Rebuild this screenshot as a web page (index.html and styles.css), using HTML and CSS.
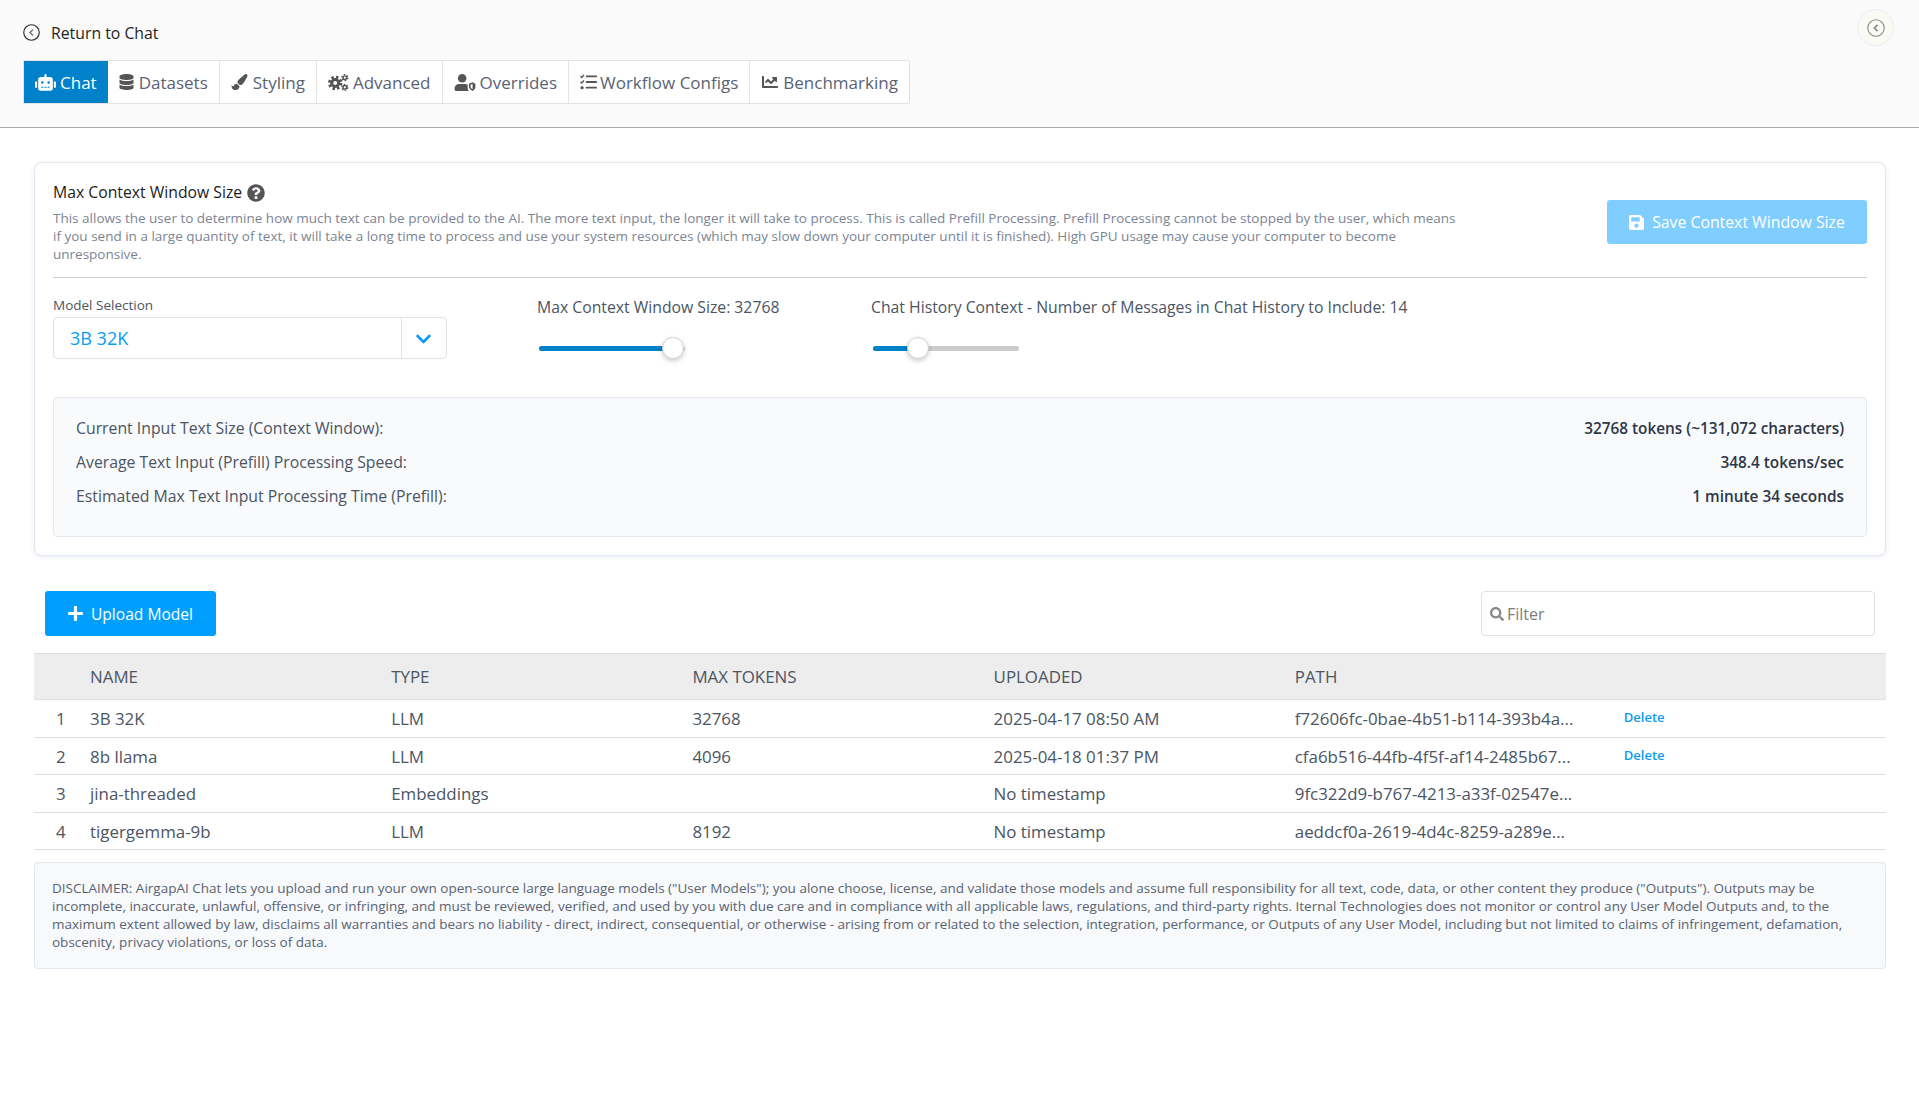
FILE: index.html
```html
<!DOCTYPE html>
<html lang="en">
<head>
<meta charset="utf-8">
<title>Models</title>
<link rel="stylesheet" href="styles.css">
</head>
<body>
<header class="top">
  <a class="return"><svg class="ret-ic" viewBox="0 0 16 16"><circle cx="8" cy="8" r="7.3"/><path d="M9.4 5.2 6.6 8l2.8 2.8"/></svg><span>Return to Chat</span></a>
  <nav class="tabs">
    <a class="tab active"><svg class="ic w-robot" viewBox="0 0 640 512"><path d="M32 224h32v192H32c-17.700 0-32-14.300-32-32V256c0-17.700 14.300-32 32-32zm576 0h-32v192h32c17.700 0 32-14.300 32-32V256c0-17.700-14.300-32-32-32zM544 168v272c0 35.300-28.700 64-64 64H160c-35.300 0-64-28.700-64-64V168c0-44.200 35.800-80 80-80h112V32c0-17.700 14.300-32 32-32s32 14.300 32 32v56h112c44.200 0 80 35.800 80 80zM264 256a40 40 0 1 0-80 0 40 40 0 0 0 80 0zm192 0a40 40 0 1 0-80 0 40 40 0 0 0 80 0zM256 384h-64v32h64zm96 0h-64v32h64zm96 0h-64v32h64z" fill-rule="evenodd"/></svg>Chat</a>
    <a class="tab"><svg class="ic w-db" viewBox="0 0 448 512"><path d="M448 73.143v45.714C448 159.143 347.667 192 224 192S0 159.143 0 118.857V73.143C0 32.857 100.333 0 224 0s224 32.857 224 73.143zM448 176v102.857C448 319.143 347.667 352 224 352S0 319.143 0 278.857V176c48.125 33.143 136.208 48.572 224 48.572S399.874 209.143 448 176zm0 160v102.857C448 479.143 347.667 512 224 512S0 479.143 0 438.857V336c48.125 33.143 136.208 48.572 224 48.572S399.874 369.143 448 336z"/></svg>Datasets</a>
    <a class="tab"><svg class="ic w-brush" viewBox="0 0 512 512"><path d="M167.020 309.340c-40.120 2.580-76.530 17.860-97.190 72.300-2.350 6.210-8 9.980-14.590 9.980-11.110 0-45.460-27.670-55.250-34.350C0 439.620 37.930 512 128 512c75.860 0 128-43.770 128-120.190 0-3.110-.65-6.080-.97-9.130l-88.010-73.340zM457.890 0c-15.160 0-29.370 6.710-40.210 16.450C213.270 199.050 192 203.340 192 257.090c0 13.700 3.250 26.760 8.730 38.700l63.820 53.180c7.210 1.800 14.640 3.030 22.390 3.030 62.110 0 98.110-45.470 211.160-256.460 7.380-14.350 13.900-29.850 13.900-45.990C512 20.640 486 0 457.890 0z"/></svg>Styling</a>
    <a class="tab"><svg class="ic w-cogs" viewBox="0 0 22 18"><g class="cog"><circle class="teeth" cx="7.500" cy="9.500" r="6.100"/><circle class="rim" cx="7.500" cy="9.500" r="3.700"/></g><g class="cog"><circle class="teeth-s" cx="17.700" cy="3.900" r="3.100"/><circle class="rim-s" cx="17.700" cy="3.900" r="1.900"/></g><g class="cog"><circle class="teeth-s" cx="17.700" cy="14.100" r="3.100"/><circle class="rim-s" cx="17.700" cy="14.100" r="1.900"/></g></svg>Advanced</a>
    <a class="tab"><svg class="ic w-user" viewBox="0 0 22 18"><circle cx="8" cy="4.500" r="4.500"/><path d="M5 10.500h6c1 0 2 .2 2.800.6V14c0 1.500.4 2.900 1.200 4H1.600C.7 18 0 17.300 0 16.400v-1C0 12.700 2.200 10.500 5 10.500z"/><path d="M15.200 10.200 19 8.800l3 1.400v3.300c0 2.200-1.400 3.600-3 4.500-1.600-.9-3.800-2.300-3.800-4.500z"/><path class="shield-cut" d="M19 10.600v5.500c-1-.6-2.100-1.500-2.100-2.900v-1.900z"/></svg>Overrides</a>
    <a class="tab"><svg class="ic w-tasks" viewBox="0 0 18 16"><path class="tk" d="M.6 2 1.800 3.200 4.200.7M.6 7.800 1.800 9l2.400-2.500"/><circle cx="2.200" cy="14" r="1.700"/><rect x="6.200" y="1" width="11.800" height="2" rx=".5"/><rect x="6.200" y="7" width="11.800" height="2" rx=".5"/><rect x="6.200" y="13" width="11.800" height="2" rx=".5"/></svg>Workflow Configs</a>
    <a class="tab"><svg class="ic w-chart" viewBox="0 0 512 512"><path d="M496 384H64V80c0-8.840-7.160-16-16-16H16C7.160 64 0 71.160 0 80v336c0 17.670 14.330 32 32 32h464c8.840 0 16-7.160 16-16v-32c0-8.840-7.160-16-16-16zM464 96H345.940c-21.380 0-32.090 25.850-16.970 40.970l32.400 32.400L288 242.750l-73.370-73.370c-12.500-12.500-32.760-12.500-45.250 0l-68.690 68.690c-6.250 6.250-6.250 16.380 0 22.630l22.620 22.620c6.250 6.250 16.380 6.250 22.630 0L192 237.250l73.370 73.370c12.500 12.500 32.760 12.500 45.250 0l96-96 32.400 32.400c15.120 15.120 40.970 4.410 40.970-16.970V112c.01-8.840-7.150-16-15.990-16z"/></svg>Benchmarking</a>
  </nav>
  <div class="collapse"><svg class="col-ic" viewBox="0 0 16 16"><circle cx="8" cy="8" r="7.300"/><path d="M9.400 5.200 6.600 8l2.800 2.800"/></svg></div>
</header>

<main class="main">
  <section class="card">
    <div class="card-head">
      <div class="card-intro">
        <h2 class="card-title">Max Context Window Size <svg class="help" viewBox="0 0 512 512"><path d="M504 256c0 136.997-111.043 248-248 248S8 392.997 8 256C8 119.083 119.043 8 256 8s248 111.083 248 248zM262.655 90c-54.497 0-89.255 22.957-116.549 63.758-3.536 5.286-2.353 12.415 2.715 16.258l34.699 26.310c5.205 3.947 12.621 3.008 16.665-2.122 17.864-22.658 30.113-35.797 57.303-35.797 20.429 0 45.698 13.148 45.698 32.958 0 14.976-12.363 22.667-32.534 33.976C247.128 238.528 216 254.941 216 296v4c0 6.627 5.373 12 12 12h56c6.627 0 12-5.373 12-12v-1.333c0-28.462 83.186-29.647 83.186-106.667 0-58.002-60.165-102-116.531-102zM256 338c-25.365 0-46 20.635-46 46 0 25.364 20.635 46 46 46s46-20.636 46-46c0-25.365-20.635-46-46-46z"/></svg></h2>
        <p class="card-desc">This allows the user to determine how much text can be provided to the AI. The more text input, the longer it will take to process. This is called Prefill Processing. Prefill Processing cannot be stopped by the user, which means if you send in a large quantity of text, it will take a long time to process and use your system resources (which may slow down your computer until it is finished). High GPU usage may cause your computer to become unresponsive.</p>
      </div>
      <button class="btn-save"><svg class="save-ic" viewBox="0 0 448 512"><path d="M433.941 129.941l-83.882-83.882A48 48 0 0 0 316.118 32H48C21.490 32 0 53.490 0 80v352c0 26.510 21.490 48 48 48h352c26.510 0 48-21.490 48-48V163.882a48 48 0 0 0-14.059-33.941zM224 416c-35.346 0-64-28.654-64-64 0-35.346 28.654-64 64-64s64 28.654 64 64c0 35.346-28.654 64-64 64zm96-304.520V212c0 6.627-5.373 12-12 12H76c-6.627 0-12-5.373-12-12V108c0-6.627 5.373-12 12-12h228.520c3.183 0 6.235 1.264 8.485 3.515l3.480 3.480A11.996 11.996 0 0 1 320 111.480z"/></svg>Save Context Window Size</button>
    </div>
    <div class="controls">
      <div class="ctl-model">
        <label class="model-label">Model Selection</label>
        <div class="select">
          <span class="select-val">3B 32K</span>
          <span class="select-arrow"><svg class="chev" viewBox="0 0 448 512"><path d="M207.029 381.476L12.686 187.132c-9.373-9.373-9.373-24.569 0-33.941l22.667-22.667c9.357-9.357 24.522-9.375 33.901-.04L224 284.505l154.745-154.021c9.379-9.335 24.544-9.317 33.901.04l22.667 22.667c9.373 9.373 9.373 24.569 0 33.941L240.971 381.476c-9.373 9.372-24.569 9.372-33.942 0z"/></svg></span>
        </div>
      </div>
      <div class="ctl-slider">
        <div class="slider-label">Max Context Window Size: 32768</div>
        <div class="slider"><div class="fill" style="width:134px"></div><div class="thumb" style="left:134px"></div></div>
      </div>
      <div class="ctl-slider">
        <div class="slider-label">Chat History Context - Number of Messages in Chat History to Include: 14</div>
        <div class="slider"><div class="fill" style="width:45px"></div><div class="thumb" style="left:45px"></div></div>
      </div>
    </div>
    <div class="stats">
      <div class="stat"><span>Current Input Text Size (Context Window):</span><b>32768 tokens (~131,072 characters)</b></div>
      <div class="stat"><span>Average Text Input (Prefill) Processing Speed:</span><b>348.4 tokens/sec</b></div>
      <div class="stat"><span>Estimated Max Text Input Processing Time (Prefill):</span><b>1 minute 34 seconds</b></div>
    </div>
  </section>

  <div class="toolbar">
    <button class="btn-upload"><svg class="plus" viewBox="0 0 448 512"><path d="M416 208H272V64c0-17.670-14.330-32-32-32h-32c-17.670 0-32 14.330-32 32v144H32c-17.670 0-32 14.330-32 32v32c0 17.670 14.330 32 32 32h144v144c0 17.670 14.330 32 32 32h32c17.670 0 32-14.330 32-32V304h144c17.670 0 32-14.330 32-32v-32c0-17.670-14.330-32-32-32z"/></svg>Upload Model</button>
    <div class="filter"><svg class="search" viewBox="0 0 512 512"><path d="M505 442.700L405.300 343c-4.500-4.500-10.600-7-17-7H372c27.600-35.300 44-79.700 44-128C416 93.100 322.900 0 208 0S0 93.100 0 208s93.100 208 208 208c48.300 0 92.700-16.400 128-44v16.300c0 6.400 2.500 12.500 7 17l99.700 99.700c9.400 9.400 24.600 9.400 33.900 0l28.300-28.300c9.400-9.400 9.400-24.600.1-34zM208 336c-70.700 0-128-57.200-128-128 0-70.700 57.200-128 128-128 70.700 0 128 57.200 128 128 0 70.700-57.200 128-128 128z"/></svg><span>Filter</span></div>
  </div>

  <div class="table">
    <div class="row head"><span></span><span>NAME</span><span>TYPE</span><span>MAX TOKENS</span><span>UPLOADED</span><span>PATH</span><span></span></div>
    <div class="row"><span class="num">1</span><span>3B 32K</span><span>LLM</span><span>32768</span><span>2025-04-17 08:50 AM</span><span>f72606fc-0bae-4b51-b114-393b4a...</span><a class="del">Delete</a></div>
    <div class="row r2"><span class="num">2</span><span>8b llama</span><span>LLM</span><span>4096</span><span>2025-04-18 01:37 PM</span><span>cfa6b516-44fb-4f5f-af14-2485b67...</span><a class="del">Delete</a></div>
    <div class="row"><span class="num">3</span><span>jina-threaded</span><span>Embeddings</span><span></span><span>No timestamp</span><span>9fc322d9-b767-4213-a33f-02547e...</span><span></span></div>
    <div class="row r2"><span class="num">4</span><span>tigergemma-9b</span><span>LLM</span><span>8192</span><span>No timestamp</span><span>aeddcf0a-2619-4d4c-8259-a289e...</span><span></span></div>
  </div>

  <div class="disclaimer">DISCLAIMER: AirgapAI Chat lets you upload and run your own open-source large language models ("User Models"); you alone choose, license, and validate those models and assume full responsibility for all text, code, data, or other content they produce ("Outputs"). Outputs may be incomplete, inaccurate, unlawful, offensive, or infringing, and must be reviewed, verified, and used by you with due care and in compliance with all applicable laws, regulations, and third-party rights. Iternal Technologies does not monitor or control any User Model Outputs and, to the maximum extent allowed by law, disclaims all warranties and bears no liability - direct, indirect, consequential, or otherwise - arising from or related to the selection, integration, performance, or Outputs of any User Model, including but not limited to claims of infringement, defamation, obscenity, privacy violations, or loss of data.</div>
</main>
</body>
</html>
```
FILE: styles.css
```css
* { box-sizing: border-box; }
html, body { margin: 0; padding: 0; }
body { font-family: "Open Sans", sans-serif; font-size: 16px; color: #374151; background: #fff; }

.top { position: relative; height: 128px; background: #fafafa; border-bottom: 1px solid #a9a9a9; padding: 22px 23px 0; }
.return { display: flex; align-items: center; height: 22px; color: #1f1f1f; font-size: 15.800px; line-height: 22px; }
.ret-ic { width: 17px; height: 17px; margin: -2px 11px 0 0; fill: none; stroke: #333; stroke-width: 1.1; }
.ret-ic path { stroke-width: 1.4; stroke: #777; }
.tabs { display: inline-flex; margin-top: 16px; height: 44px; background: #fff; border: 1px solid #e2e2e2; border-radius: 2px; }
.tab { display: flex; align-items: center; padding: 0 11px; color: #596373; font-size: 17px; border-right: 1px solid #e5e5e5; white-space: nowrap; }
.tab:last-child { border-right: 0; }
.tab.active { background: #0081c9; color: #fff; border-right: 0; }
.ic { height: 16px; margin-right: 4px; fill: #555; flex: none; }
.active .ic { fill: #fff; }
.w-robot { width: 21px; height: 17px; }
.w-db { width: 15px; margin-right: 5px; }
.w-brush { width: 17px; margin-right: 5px; }
.w-cogs { width: 21px; height: 17px; }
.w-user { width: 22px; height: 17px; }
.w-tasks { width: 17px; margin-right: 3px; }
.w-chart { width: 18px; }
.cog .teeth { fill: none; stroke: #555; stroke-width: 3; stroke-dasharray: 2.600 2.190; }
.cog .rim { fill: none; stroke: #555; stroke-width: 3.2; }
.cog .teeth-s { fill: none; stroke: #555; stroke-width: 1.5; stroke-dasharray: 1.700 1.550; }
.cog .rim-s { fill: none; stroke: #555; stroke-width: 1.5; }
.shield-cut { fill: #fff; }
.tk { fill: none; stroke: #555; stroke-width: 1.5; }
.collapse { position: absolute; top: 9px; right: 25px; width: 37px; height: 37px; display: flex; align-items: center; justify-content: center; background: #fafaf5; border: 1px solid #ededed; border-radius: 50%; }
.col-ic { width: 18px; height: 18px; fill: none; stroke: #8a8a8a; stroke-width: 1; }
.col-ic path { stroke-width: 1.5; }

.main { padding: 34px 33px 0 34px; }
.card { background: #fff; border: 1px solid #e2e8f0; border-radius: 8px; box-shadow: 0 1px 4px rgba(30, 60, 110, .1); padding: 17px 18px 18px; height: 394px; }
.card-head { display: flex; justify-content: space-between; align-items: center; padding-bottom: 15px; border-bottom: 1px solid #cfcfcf; height: 98px; }
.card-intro { width: 1410px; align-self: flex-start; }
.card-title { display: flex; align-items: center; margin: 0; font-size: 15.750px; font-weight: 400; line-height: 25px; color: #1c1c1c; }
.help { width: 18px; height: 18px; margin-left: 5px; fill: #555; }
.card-desc { margin: 4px 0 0; font-size: 13.500px; line-height: 18px; color: #7b8494; }
.btn-save { display: flex; align-items: center; justify-content: center; width: 260px; height: 44px; margin-top: 2px; border: 0; border-radius: 3px; background: #80ceff; color: #fff; font: 400 15.800px "Open Sans", sans-serif; }
.save-ic { width: 15px; height: 17px; fill: #fff; margin-right: 8px; }

.controls { display: grid; grid-template-columns: 484px 334px 1fr; margin-top: 17px; height: 102px; }
.ctl-model { width: 394px; }
.model-label { display: block; font-size: 13.500px; line-height: 20px; color: #4b5563; margin-bottom: 2px; }
.select { display: flex; height: 42px; border: 1px solid #e2e2e2; border-radius: 4px; align-items: stretch; }
.select-val { flex: 1; padding-left: 16px; line-height: 40px; color: #0a9bf5; font-size: 18px; }
.select-arrow { width: 45px; padding-right: 2px; display: flex; align-items: center; justify-content: center; border-left: 1px solid #e2e2e2; }
.chev { width: 15px; height: 18px; fill: #0a9bf5; margin-top: 2px; }
.slider-label { font-size: 15.750px; line-height: 24px; color: #4b5563; white-space: nowrap; }
.slider { position: relative; width: 146px; height: 5px; margin: 27px 0 0 2px; background: #cccccc; border-radius: 3px; }
.fill { height: 5px; background: #0081c9; border-radius: 3px 0 0 3px; }
.thumb { position: absolute; top: -9px; width: 22px; height: 22px; margin-left: -11px; background: #fff; border: 1px solid #d4d4d4; border-radius: 50%; box-shadow: 0 2px 5px rgba(0, 0, 0, .2); }

.stats { height: 140px; background: #f8fafc; border: 1px solid #e2e8f0; border-radius: 4px; padding: 13px 22px; }
.stat { display: flex; justify-content: space-between; height: 34px; line-height: 34px; color: #4b5563; font-size: 15.800px; }
.stat b { font-weight: 600; font-size: 15.350px; color: #2d3748; }

.toolbar { display: flex; justify-content: space-between; padding: 35px 11px 0; height: 97px; }
.btn-upload { display: flex; align-items: center; justify-content: center; width: 171px; height: 45px; border: 0; border-radius: 3px; background: #009ffd; color: #fff; font: 400 15.600px "Open Sans", sans-serif; }
.plus { width: 15px; height: 17px; margin-right: 8px; fill: #fff; }
.filter { display: flex; align-items: center; width: 394px; height: 45px; padding-left: 8px; border: 1px solid #e2e2e2; border-radius: 4px; color: #7c7c7c; font-size: 16px; }
.search { width: 14px; height: 14px; margin-right: 3px; fill: #888; }

.row { display: grid; grid-template-columns: 56px 301.200px 301.200px 301.200px 301.200px 329px 1fr; height: 38px; align-items: center; border-bottom: 1px solid #dedede; color: #4b5563; font-size: 16.900px; white-space: nowrap; }
.row.r2 { height: 37px; }
.row > span:first-child { padding-left: 22px; }
.row.head { height: 47px; background: #ededed; border-top: 1px solid #dedede; }
.del { font-size: 13px; font-weight: 600; color: #0a9bf5; margin-top: -3px; }

.disclaimer { margin-top: 12px; height: 107px; padding: 16px 17px 0; background: #f7f9fb; border: 1px solid #e2e8f0; border-radius: 4px; font-size: 13.500px; line-height: 18px; color: #596373; }
```
